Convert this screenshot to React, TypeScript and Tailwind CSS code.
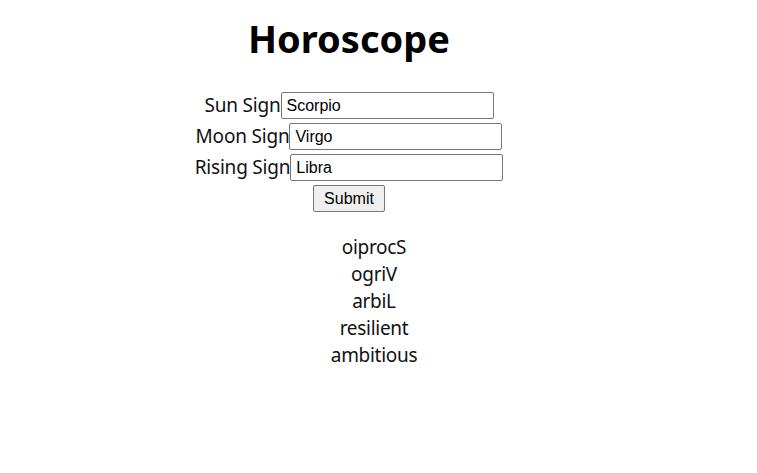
import { useState } from "react";

const label = "text-[19px] leading-[27px] tracking-[-0.2px] text-[#111]";
const field =
  "h-[27px] w-[213px] rounded-[2px] border border-[#767676] px-[5px] text-[16px] text-black outline-none";

function Row({
  name,
  value,
  onChange,
}: {
  name: string;
  value: string;
  onChange: (v: string) => void;
}) {
  return (
    <div className="flex items-center justify-center">
      <span className={label}>{name}</span>
      <input
        className={field}
        style={{ fontFamily: "'Liberation Sans', Arial, sans-serif" }}
        value={value}
        onChange={(e) => onChange(e.target.value)}
      />
    </div>
  );
}

export default function App() {
  const [sun, setSun] = useState("Scorpio");
  const [moon, setMoon] = useState("Virgo");
  const [rising, setRising] = useState("Libra");

  const flip = (s: string) => s.split("").reverse().join("");

  return (
    <div className="min-h-[473px] w-[757px] bg-white font-['Noto_Sans',sans-serif] text-[#111]">
      <div className="w-[698px] text-center">
        <h1 className="pt-[14px] text-[38px] font-bold leading-[48px] text-black">
          Horoscope
        </h1>
        <form
          className="mt-[30px] flex flex-col gap-[4px]"
          onSubmit={(e) => e.preventDefault()}
        >
          <Row name="Sun Sign" value={sun} onChange={setSun} />
          <Row name="Moon Sign" value={moon} onChange={setMoon} />
          <Row name="Rising Sign" value={rising} onChange={setRising} />
          <div className="flex justify-center">
            <button
              type="submit"
              className="h-[27px] w-[72px] rounded-[2px] border border-[#767676] bg-[#efefef] font-['Liberation_Sans',Arial,sans-serif] text-[16px] text-black"
            >
              Submit
            </button>
          </div>
        </form>
      </div>
      <div className="mt-[22px] w-[748px] text-center text-[19px] leading-[27px] tracking-[-0.3px]">
        <div>{flip(sun)}</div>
        <div>{flip(moon)}</div>
        <div>{flip(rising)}</div>
        <div>resilient</div>
        <div>ambitious</div>
      </div>
    </div>
  );
}
